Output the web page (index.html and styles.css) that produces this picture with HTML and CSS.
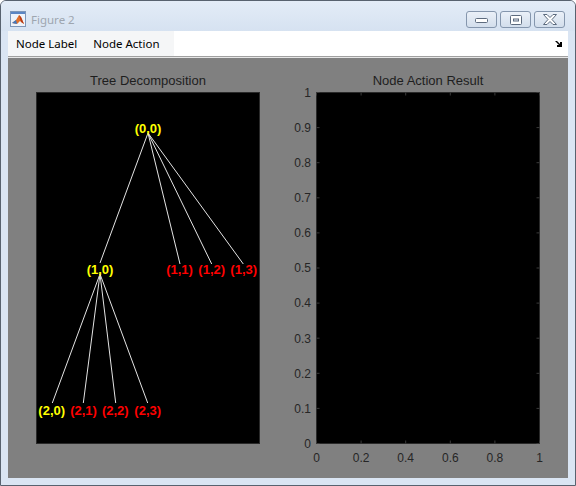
FILE: index.html
```html
<!DOCTYPE html>
<html>
<head>
<meta charset="utf-8">
<link rel="stylesheet" href="styles.css">
</head>
<body>
<div class="window">
  <div class="titlebar">
    <svg class="app-icon" width="16" height="16" viewBox="0 0 16 16">
      <rect x="0.5" y="0.5" width="15" height="15" fill="#eef3fa" stroke="#7d96b8"/>
      <rect x="1" y="1" width="14" height="2" fill="#5b86c4"/>
      <polygon points="2,12 6,9 9,4 11,6 14,13 10,10 7,13" fill="#e2712b"/>
      <polygon points="9,4 11,6 14,13 11,11" fill="#b83a16"/>
      <polygon points="2,12 6,9 7,13" fill="#3f78c0"/>
    </svg>
    <span class="title">Figure 2</span>
    <div class="caption-buttons">
      <div class="cbtn">
        <svg width="13" height="7" viewBox="0 0 13 7"><rect x="0.5" y="2.5" width="12" height="4" rx="1" fill="#fff" stroke="#5d6b7e"/></svg>
      </div>
      <div class="cbtn">
        <svg width="12" height="10" viewBox="0 0 12 10"><rect x="0.5" y="0.5" width="11" height="9" rx="1" fill="#fff" stroke="#5d6b7e"/><rect x="3" y="3.5" width="6" height="3" fill="#5d6b7e"/><rect x="4" y="4.5" width="4" height="1" fill="#e9eef5"/></svg>
      </div>
      <div class="cbtn">
        <svg width="16" height="11" viewBox="0 0 16 11"><path d="M1.5 0.5 H5 L8 3.5 L11 0.5 H14.5 L10 5.5 L14.5 10.5 H11 L8 7.5 L5 10.5 H1.5 L6 5.5 Z" fill="#fff" stroke="#5d6b7e" stroke-linejoin="round"/></svg>
      </div>
    </div>
  </div>
  <div class="client">
    <div class="menubar">
      <div class="menus">
        <span class="menu">Node Label</span>
        <span class="menu">Node Action</span>
      </div>
      <svg class="dock-arrow" width="7" height="6" viewBox="0 0 7 6">
        <path d="M0 0 L2 0 L5 3 L5 1 L7 1 L7 6 L2 6 L2 4 L4 4 L1 1 Z" fill="#000"/>
      </svg>
    </div>
    <div class="figure">
      <div class="panel">
        <div class="ax-title">Tree Decomposition</div>
        <svg class="axes" width="224" height="352" viewBox="0 0 224 352">
          <rect class="ax-box" x="0.5" y="0.5" width="223" height="351"/>
          <g class="edges">
            <line x1="112" y1="41" x2="64" y2="171"/>
            <line x1="112" y1="41" x2="144" y2="172"/>
            <line x1="112" y1="41" x2="175.7" y2="172"/>
            <line x1="112" y1="41" x2="207.3" y2="172"/>
            <line x1="64" y1="182" x2="16.3" y2="311"/>
            <line x1="64" y1="182" x2="47.3" y2="311"/>
            <line x1="64" y1="182" x2="79.7" y2="311"/>
            <line x1="64" y1="182" x2="111.7" y2="311"/>
          </g>
          <g class="nodes">
            <text class="yellow" x="112" y="41">(0,0)</text>
            <text class="yellow" x="64" y="182">(1,0)</text>
            <text class="red" x="143.5" y="182">(1,1)</text>
            <text class="red" x="175.7" y="182">(1,2)</text>
            <text class="red" x="207.7" y="182">(1,3)</text>
            <text class="yellow" x="15.7" y="323">(2,0)</text>
            <text class="red" x="47.5" y="323">(2,1)</text>
            <text class="red" x="79.3" y="323">(2,2)</text>
            <text class="red" x="111.7" y="323">(2,3)</text>
          </g>
        </svg>
      </div>
      <div class="panel">
        <div class="ax-title">Node Action Result</div>
        <svg class="axes" width="224" height="352" viewBox="0 0 224 352">
          <rect class="ax-box" x="0.5" y="0.5" width="223" height="351"/>
          <g class="ticks">
            <path d="M0.5 351.5h3M0.5 316.4h3M0.5 281.3h3M0.5 246.2h3M0.5 211.1h3M0.5 176h3M0.5 140.9h3M0.5 105.8h3M0.5 70.7h3M0.5 35.6h3M0.5 0.5h3"/>
            <path d="M223.5 351.5h-3M223.5 316.4h-3M223.5 281.3h-3M223.5 246.2h-3M223.5 211.1h-3M223.5 176h-3M223.5 140.9h-3M223.5 105.8h-3M223.5 70.7h-3M223.5 35.6h-3M223.5 0.5h-3"/>
            <path d="M0.5 351.5v-3M45.1 351.5v-3M89.7 351.5v-3M134.3 351.5v-3M178.9 351.5v-3M223.5 351.5v-3"/>
            <path d="M0.5 0.5v3M45.1 0.5v3M89.7 0.5v3M134.3 0.5v3M178.9 0.5v3M223.5 0.5v3"/>
          </g>
          <g class="ylabels">
            <text x="-5" y="356">0</text>
            <text x="-5" y="320.7">0.1</text>
            <text x="-5" y="285.6">0.2</text>
            <text x="-5" y="250.5">0.3</text>
            <text x="-5" y="215.4">0.4</text>
            <text x="-5" y="180.3">0.5</text>
            <text x="-5" y="145.2">0.6</text>
            <text x="-5" y="110.1">0.7</text>
            <text x="-5" y="75">0.8</text>
            <text x="-5" y="39.9">0.9</text>
            <text x="-5" y="4.8">1</text>
          </g>
          <g class="xlabels">
            <text x="0.5" y="369.6">0</text>
            <text x="45.1" y="369.6">0.2</text>
            <text x="89.7" y="369.6">0.4</text>
            <text x="134.3" y="369.6">0.6</text>
            <text x="178.9" y="369.6">0.8</text>
            <text x="223.5" y="369.6">1</text>
          </g>
        </svg>
      </div>
    </div>
  </div>
</div>
</body>
</html>
```
FILE: styles.css
```css
html, body {
  margin: 0;
  padding: 0;
  background: #ffffff;
}
body {
  font-family: "Noto Sans", "Liberation Sans", sans-serif;
}
.window {
  width: 576px;
  height: 486px;
  box-sizing: border-box;
  border: 1px solid #58626f;
  border-radius: 6px 6px 0 0;
  background: #dae5f3;
  display: flex;
  flex-direction: column;
  overflow: hidden;
}
.titlebar {
  height: 30px;
  flex: none;
  display: flex;
  align-items: flex-start;
  padding: 0 10px 0 9px;
  background: linear-gradient(#e3ecf7, #d6e2f1);
}
.app-icon {
  margin-top: 10px;
  flex: none;
}
.title {
  margin-top: 11px;
  margin-left: 5px;
  font-size: 11.5px;
  line-height: 16px;
  color: #9ea6b0;
}
.caption-buttons {
  margin-left: auto;
  margin-top: 10px;
  display: flex;
  gap: 3px;
}
.cbtn {
  width: 31px;
  height: 17px;
  box-sizing: border-box;
  border: 1px solid #8596ad;
  border-radius: 3px;
  background: linear-gradient(#eaf0f8, #d3deec);
  display: flex;
  align-items: center;
  justify-content: center;
}
.client {
  flex: 1;
  margin: 0 7px 7px 7px;
  display: flex;
  flex-direction: column;
}
.menubar {
  height: 25px;
  flex: none;
  background: #ffffff;
  border-bottom: 1px solid #a0a0a0;
  display: flex;
  align-items: center;
}
.menus {
  width: 166px;
  height: 100%;
  background: #f5f6f7;
  display: flex;
  align-items: center;
}
.menu {
  padding: 0 8px;
  font-size: 11.5px;
  color: #000;
}
.dock-arrow {
  margin-left: auto;
  margin-right: 6px;
}
.figure {
  flex: 1;
  background: #808080;
  border-top: 1px solid #e6e6e6;
  display: flex;
  gap: 56px;
  padding: 15px 0 0 28px;
}
.panel {
  width: 224px;
  display: flex;
  flex-direction: column;
}
.ax-title {
  font-family: "Liberation Sans", Arial, sans-serif;
  font-size: 13px;
  line-height: 16px;
  text-align: center;
  color: #1e1e1e;
  margin-bottom: 3px;
}
.axes {
  display: block;
  overflow: visible;
}
.ax-box {
  fill: #000;
  stroke: #2a2a2a;
}
.edges line {
  stroke: #e4e4e4;
  stroke-width: 1;
}
.nodes text {
  font-family: "Liberation Sans", Arial, sans-serif;
  font-weight: bold;
  font-size: 13px;
  text-anchor: middle;
}
.yellow { fill: #ffff00; }
.red { fill: #ff0000; }
.ticks path {
  stroke: #3a3a3a;
  stroke-width: 1;
  fill: none;
}
.ylabels text, .xlabels text {
  font-family: "Liberation Sans", Arial, sans-serif;
  font-size: 12px;
  fill: #262626;
}
.ylabels text { text-anchor: end; }
.xlabels text { text-anchor: middle; }
```
